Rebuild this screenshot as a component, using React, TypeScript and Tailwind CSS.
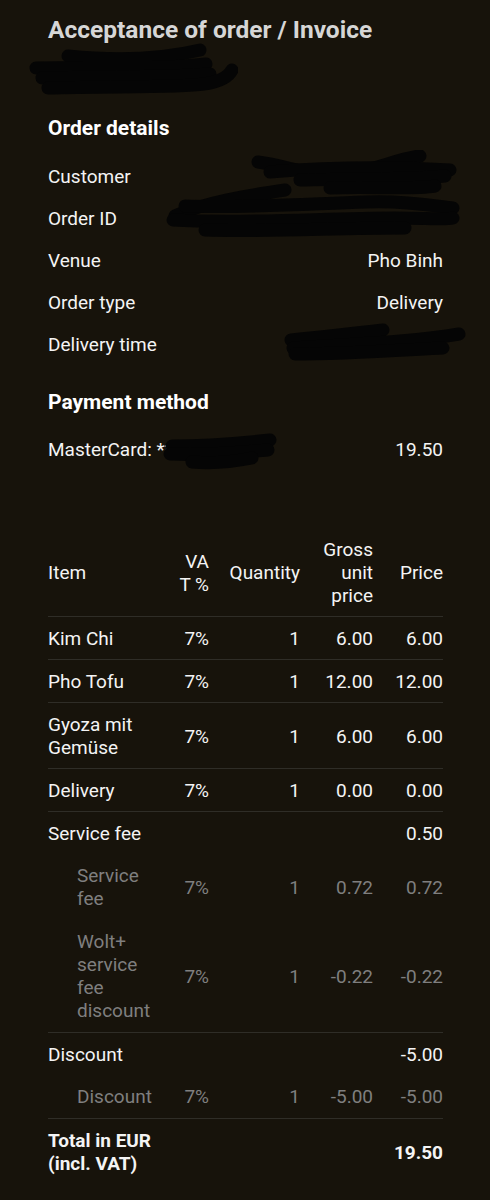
import React from "react";

type Row = {
  item: string;
  vat?: string;
  qty?: string;
  unit?: string;
  price: string;
  sub?: boolean;
  border?: boolean;
  bold?: boolean;
};

const rows: Row[] = [
  { item: "Kim Chi", vat: "7%", qty: "1", unit: "6.00", price: "6.00", border: true },
  { item: "Pho Tofu", vat: "7%", qty: "1", unit: "12.00", price: "12.00", border: true },
  { item: "Gyoza mit Gemüse", vat: "7%", qty: "1", unit: "6.00", price: "6.00", border: true },
  { item: "Delivery", vat: "7%", qty: "1", unit: "0.00", price: "0.00", border: true },
  { item: "Service fee", price: "0.50", border: true },
  { item: "Service fee", vat: "7%", qty: "1", unit: "0.72", price: "0.72", sub: true },
  { item: "Wolt+ service fee discount", vat: "7%", qty: "1", unit: "-0.22", price: "-0.22", sub: true },
  { item: "Discount", price: "-5.00", border: true },
  { item: "Discount", vat: "7%", qty: "1", unit: "-5.00", price: "-5.00", sub: true },
  { item: "Total in EUR (incl. VAT)", price: "19.50", border: true, bold: true },
];

const grid = "grid grid-cols-[111px_30px_71px_53px_50px] gap-x-5 items-center";

function Scribble({
  className,
  w,
  h,
  paths,
}: {
  className: string;
  w: number;
  h: number;
  paths: string[];
}) {
  return (
    <svg
      className={className}
      width={w}
      height={h}
      viewBox={`0 0 ${w} ${h}`}
      fill="none"
      stroke="#050505"
      strokeWidth={13}
      strokeLinecap="round"
      strokeLinejoin="round"
    >
      {paths.map((d, i) => (
        <path key={i} d={d} />
      ))}
    </svg>
  );
}

function DetailRow({ label, value }: { label: string; value?: string }) {
  return (
    <div className="flex h-[42px] items-center justify-between">
      <span>{label}</span>
      {value ? <span>{value}</span> : null}
    </div>
  );
}

export default function App() {
  return (
    <div
      className="relative min-h-screen bg-[#17130b] pl-12 pr-[47px] pb-10 text-[19px] leading-[23px] text-[#f4f4f4]"
      style={{ fontFamily: "Roboto, 'Noto Sans', sans-serif" }}
    >
      <h1 className="pt-[15px] text-[24.5px] leading-[30px] font-bold text-[#d6d6d6]">
        Acceptance of order / Invoice
      </h1>

      <h2 className="mt-[69px] text-[21px] leading-[28px] font-bold text-white">
        Order details
      </h2>
      <div className="mt-[13px]">
        <DetailRow label="Customer" />
        <DetailRow label="Order ID" />
        <DetailRow label="Venue" value="Pho Binh" />
        <DetailRow label="Order type" value="Delivery" />
        <DetailRow label="Delivery time" />
      </div>

      <h2 className="mt-[23px] text-[21px] leading-[28px] font-bold text-white">
        Payment method
      </h2>
      <div className="mt-[12px] flex h-[42px] items-center justify-between">
        <span>MasterCard: **</span>
        <span>19.50</span>
      </div>

      <div className="mt-[58px]">
        <div className={`${grid} pt-[10px] pb-[9px]`}>
          <span>Item</span>
          <span className="text-right break-all">VAT %</span>
          <span className="text-right">Quantity</span>
          <span className="text-right">Gross unit price</span>
          <span className="text-right">Price</span>
        </div>
        {rows.map((r, i) => (
          <div
            key={i}
            className={`${grid} pt-[10px] ${
              r.border ? "border-t border-[#2f2d27] pb-[9px]" : "pb-[10px]"
            } ${r.sub ? "text-[#7f7f7f]" : ""} ${r.bold ? "font-bold" : ""}`}
          >
            <span className={r.sub ? "pl-[29px]" : ""}>{r.item}</span>
            <span className="text-right">{r.vat}</span>
            <span className="text-right">{r.qty}</span>
            <span className="text-right">{r.unit}</span>
            <span className="text-right">{r.price}</span>
          </div>
        ))}
      </div>

      {/* redaction marks */}
      <Scribble
        className="absolute left-[28px] top-[42px]"
        w={210}
        h={56}
        paths={[
          "M40 14 C 80 18, 130 18, 172 8",
          "M8 26 C 70 24, 130 28, 178 22",
          "M14 36 C 70 34, 130 36, 182 32",
          "M20 46 C 80 44, 150 46, 176 42 C 190 40, 200 36, 204 28",
        ]}
      />
      <Scribble
        className="absolute left-[250px] top-[150px]"
        w={212}
        h={48}
        paths={[
          "M8 12 C 40 16, 70 30, 100 24 C 130 18, 150 8, 170 6",
          "M20 22 C 70 18, 130 16, 200 20",
          "M50 30 C 110 28, 160 30, 195 26",
          "M80 38 C 120 36, 160 40, 185 36",
        ]}
      />
      <Scribble
        className="absolute left-[165px] top-[180px]"
        w={296}
        h={60}
        paths={[
          "M120 10 C 80 16, 40 22, 10 36",
          "M20 26 C 80 28, 140 24, 200 22 C 240 20, 270 26, 288 28",
          "M8 40 C 80 44, 160 38, 230 38 C 260 38, 280 40, 288 38",
          "M40 50 C 100 52, 170 48, 240 48",
        ]}
      />
      <Scribble
        className="absolute left-[283px] top-[322px]"
        w={184}
        h={40}
        paths={[
          "M8 18 C 50 14, 80 10, 100 8",
          "M10 26 C 70 22, 130 20, 176 12",
          "M12 32 C 60 32, 120 28, 160 26",
        ]}
      />
      <Scribble
        className="absolute left-[162px] top-[432px]"
        w={116}
        h={38}
        paths={[
          "M10 14 C 40 14, 70 12, 108 8",
          "M8 22 C 50 24, 80 20, 106 18",
          "M30 30 C 50 32, 70 30, 90 26",
        ]}
      />
    </div>
  );
}
